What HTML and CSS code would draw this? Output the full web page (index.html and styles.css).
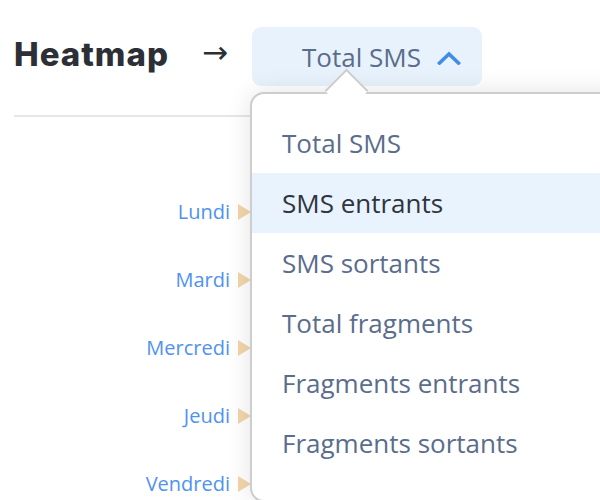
FILE: index.html
```html
<!DOCTYPE html>
<html lang="fr">
<head>
<meta charset="utf-8">
<title>Heatmap</title>
<link rel="stylesheet" href="styles.css">
</head>
<body>
<div class="page">
  <header class="header">
    <h1 class="title">Heatmap</h1>
    <span class="arrow">→</span>
    <button class="select" type="button">
      <span class="select-label">Total SMS</span>
      <svg class="chevron" width="24" height="14" viewBox="0 0 24 14"><polyline points="2.5,12 12,3 21.5,12" fill="none" stroke="#3f8de8" stroke-width="3.6" stroke-linecap="square" stroke-linejoin="miter"/></svg>
    </button>
  </header>
  <hr class="divider">
  <section class="heatmap">
    <div class="row"><span class="day">Lundi</span><span class="tri"></span></div>
    <div class="row"><span class="day">Mardi</span><span class="tri"></span></div>
    <div class="row"><span class="day">Mercredi</span><span class="tri"></span></div>
    <div class="row"><span class="day">Jeudi</span><span class="tri"></span></div>
    <div class="row"><span class="day">Vendredi</span><span class="tri"></span></div>
  </section>
  <ul class="menu">
    <li class="menu-item">Total SMS</li>
    <li class="menu-item is-active">SMS entrants</li>
    <li class="menu-item">SMS sortants</li>
    <li class="menu-item">Total fragments</li>
    <li class="menu-item">Fragments entrants</li>
    <li class="menu-item">Fragments sortants</li>
  </ul>
</div>
</body>
</html>
```

FILE: styles.css
```css
html, body {
  margin: 0;
  padding: 0;
  background: #ffffff;
  overflow: hidden;
}
.page {
  position: relative;
  width: 600px;
  height: 500px;
  overflow: hidden;
  font-family: "Open Sans", "Noto Sans", sans-serif;
}
.header {
  display: flex;
  align-items: center;
  padding: 27px 0 0 14px;
  height: 59px;
}
.title {
  margin: 0 34px 0 0;
  width: 154px;
  font-family: Inter, "DejaVu Sans", sans-serif;
  font-weight: 800;
  font-size: 33px;
  letter-spacing: 1px;
  color: #2c2f36;
  line-height: 1;
  white-space: nowrap;
  position: relative;
  top: -2px;
}
.arrow {
  width: 26px;
  margin-right: 24px;
  font-family: "DejaVu Sans", sans-serif;
  font-size: 31px;
  color: #2c2f36;
  line-height: 1;
  white-space: nowrap;
  position: relative;
  top: -4px;
}
.select {
  display: flex;
  align-items: center;
  gap: 16px;
  width: 230px;
  height: 59px;
  padding: 0 0 0 50px;
  margin: 0;
  border: none;
  border-radius: 9px;
  background: #e8f2fc;
  font-family: "Open Sans", "Noto Sans", sans-serif;
  font-size: 26px;
  color: #5a6d8c;
}
.select-label {
  line-height: 1;
}
.chevron {
  display: block;
  position: relative;
  top: 1px;
}
.divider {
  margin: 29px 0 0 14px;
  border: none;
  border-top: 2px solid #e6e6e6;
  height: 0;
}
.heatmap {
  padding-top: 61px;
}
.row {
  display: flex;
  align-items: center;
  height: 68px;
}
.day {
  width: 230px;
  text-align: right;
  font-size: 20px;
  color: #4f93ef;
  line-height: 1;
}
.tri {
  margin-left: 8px;
  width: 0;
  height: 0;
  border-top: 8px solid transparent;
  border-bottom: 8px solid transparent;
  border-left: 13px solid #f2d5aa;
}
.menu {
  position: absolute;
  left: 250px;
  top: 92px;
  width: 380px;
  height: 410px;
  margin: 0;
  padding: 19px 0 0 0;
  box-sizing: border-box;
  list-style: none;
  background: #ffffff;
  border: 2px solid #cdcdcd;
  border-radius: 14px;
  box-shadow: 0 0 26px rgba(0, 0, 0, 0.11);
}
.menu::before {
  content: "";
  position: absolute;
  left: 79px;
  top: -19px;
  width: 31px;
  height: 31px;
  background: #ffffff;
  border-top: 2px solid #cdcdcd;
  border-left: 2px solid #cdcdcd;
  box-sizing: border-box;
  transform: rotate(45deg);
}
.menu-item {
  position: relative;
  height: 60px;
  line-height: 60px;
  padding-left: 30px;
  font-size: 26px;
  color: #5a6d8c;
  white-space: nowrap;
}
.menu-item.is-active {
  background: #e8f3fd;
  color: #2f343d;
}
```
